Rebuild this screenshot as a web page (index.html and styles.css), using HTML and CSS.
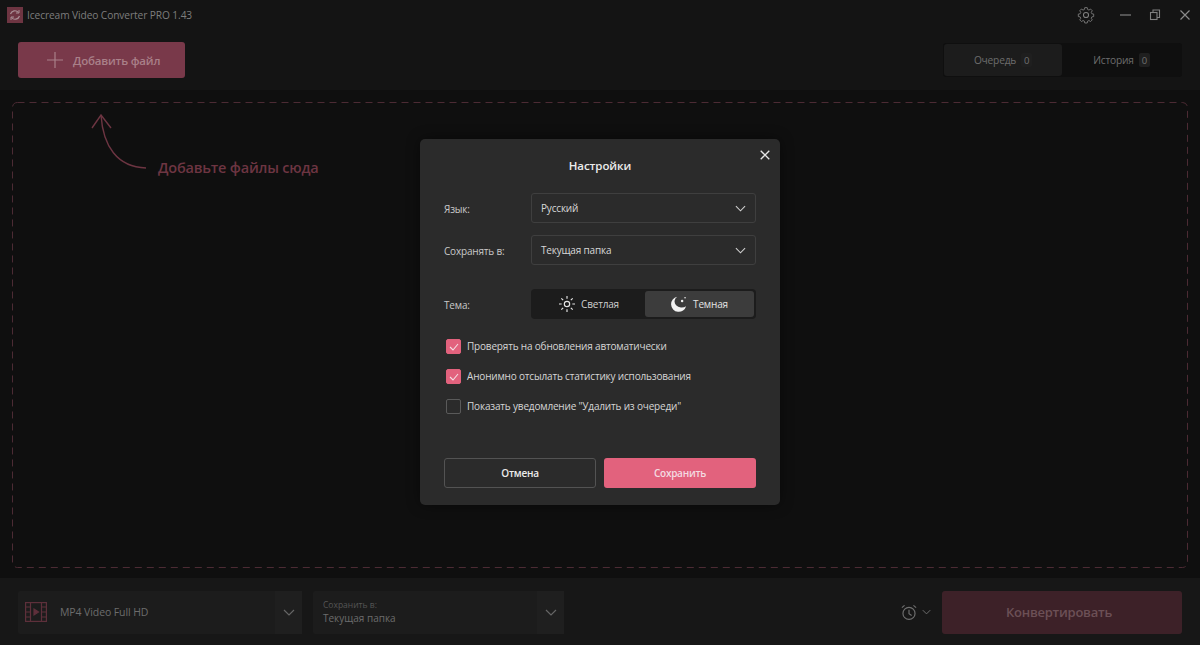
FILE: index.html
```html
<!DOCTYPE html>
<html lang="ru">
<head>
<meta charset="utf-8">
<title>Icecream Video Converter PRO</title>
<link rel="stylesheet" href="styles.css">
</head>
<body>
<div class="app">
  <header class="top">
    <div class="titlebar">
      <div class="brand">
        <svg class="logo" viewBox="0 0 16 16" width="16" height="16"><rect width="16" height="16" fill="#6e3542"/><path d="M3.5 7a4.600 4.600 0 0 1 8-1.500M12.500 9a4.600 4.600 0 0 1-8 1.500" fill="none" stroke="#a98f95" stroke-width="1.200"/><path d="M12 3v3h-3M4 13v-3h3" fill="none" stroke="#a98f95" stroke-width="1"/></svg>
        <span class="apptitle">Icecream Video Converter PRO 1.43</span>
      </div>
      <div class="winctl">
        <svg class="gear" viewBox="0 0 24 24" width="18" height="18" fill="none" stroke="#7f7f7f" stroke-width="1.400"><path d="M10 1.500h4l.6 3 2.200 1 2.600-1.700 2.800 2.800-1.700 2.600 1 2.300 3 .5v4l-3 .6-1 2.200 1.700 2.600-2.800 2.800-2.600-1.700-2.200 1-.6 3h-4l-.6-3-2.200-1-2.600 1.700-2.800-2.800 1.700-2.600-1-2.200-3-.6v-4l3-.5 1-2.300-1.700-2.600 2.800-2.800 2.600 1.700 2.200-1z" transform="translate(12 12) scale(.82) translate(-12 -13.500)" stroke-linejoin="round"/><circle cx="12" cy="12" r="3.400"/></svg>
        <svg class="min" viewBox="0 0 12 12" width="12" height="12"><path d="M0 6h11" stroke="#7f7f7f" stroke-width="1.200"/></svg>
        <svg class="restore" viewBox="0 0 12 12" width="12" height="12" fill="none" stroke="#7f7f7f" stroke-width="1.100"><rect x="1.500" y="3.500" width="6.500" height="7"/><path d="M4 3.500V1h6.500v7.500H8"/></svg>
        <svg class="close" viewBox="0 0 12 12" width="12" height="12"><path d="M1.500 1.500l9 9M10.500 1.500l-9 9" stroke="#8a8a8a" stroke-width="1.200"/></svg>
      </div>
    </div>
    <div class="toolbar">
      <button class="add">
        <svg viewBox="0 0 16 16" width="16" height="16"><path d="M8 0v16M0 8h16" stroke="#a98089" stroke-width="1.200"/></svg>
        <span>Добавить файл</span>
      </button>
      <div class="tabs">
        <div class="tab active"><span>Очередь</span><b class="count">0</b></div>
        <div class="tab"><span>История</span><b class="count">0</b></div>
      </div>
    </div>
  </header>

  <main class="drop">
    <svg class="dash" width="1176" height="466" viewBox="0 0 1176 466"><rect x=".5" y=".5" width="1175" height="465" rx="5" fill="none" stroke="#4c2b34" stroke-dasharray="7 5"/></svg>
    <div class="hint">
      <svg viewBox="0 0 56 60" width="56" height="60" fill="none" stroke="#6d3542" stroke-width="1.400"><path d="M10 1C12 32 26 53 55 54"/><path d="M1 14L10 1l10 13"/></svg>
      <span>Добавьте файлы сюда</span>
    </div>
  </main>

  <footer class="bottom">
    <div class="selectbox format">
      <div class="selmain">
        <svg viewBox="0 0 22 20" width="22" height="20" fill="none" stroke="#5e303b" stroke-width="1.200"><rect x=".6" y=".6" width="20.800" height="18.800"/><path d="M5.500.6v18.800M16.500.6v18.800M.6 5h5M.6 10h5M.6 15h5M16.500 5h5M16.500 10h5M16.500 15h5"/><path d="M9 7l4.500 3L9 13z" fill="#5e303b"/></svg>
        <span>MP4 Video Full HD</span>
      </div>
      <div class="selarrow"><svg class="chev" viewBox="0 0 12 7" width="12" height="7"><path d="M1 1l5 5 5-5" fill="none" stroke="#666" stroke-width="1.200"/></svg></div>
    </div>
    <div class="selectbox saveto">
      <div class="selmain stacked">
        <small>Сохранить в:</small>
        <span>Текущая папка</span>
      </div>
      <div class="selarrow"><svg class="chev" viewBox="0 0 12 7" width="12" height="7"><path d="M1 1l5 5 5-5" fill="none" stroke="#666" stroke-width="1.200"/></svg></div>
    </div>
    <div class="spacer"></div>
    <div class="timer">
      <svg viewBox="0 0 18 18" width="16" height="17" fill="none" stroke="#6f6f6f" stroke-width="1.300"><circle cx="9" cy="10" r="6.800"/><path d="M9 6v4.300l3 2M1 3.500L4 1M17 3.500L14 1"/></svg>
      <svg class="chev" viewBox="0 0 12 7" width="9" height="6"><path d="M1 1l5 5 5-5" fill="none" stroke="#6f6f6f" stroke-width="1.300"/></svg>
    </div>
    <button class="convert">Конвертировать</button>
  </footer>
</div>

<section class="dialog">
  <svg class="dlgclose" viewBox="0 0 10 10" width="10" height="10"><path d="M.7.7l8.600 8.600M9.300.7L.7 9.300" stroke="#e6e6e6" stroke-width="1.300"/></svg>
  <h1>Настройки</h1>
  <div class="row first">
    <label>Язык:</label>
    <div class="field"><span>Русский</span><svg viewBox="0 0 12 7" width="11" height="7"><path d="M1 1l5 5 5-5" fill="none" stroke="#cfcfcf" stroke-width="1.200"/></svg></div>
  </div>
  <div class="row second">
    <label>Сохранять в:</label>
    <div class="field"><span>Текущая папка</span><svg viewBox="0 0 12 7" width="11" height="7"><path d="M1 1l5 5 5-5" fill="none" stroke="#cfcfcf" stroke-width="1.200"/></svg></div>
  </div>
  <div class="row third">
    <label>Тема:</label>
    <div class="theme">
      <div class="opt">
        <svg viewBox="0 0 18 18" width="16" height="16" fill="none" stroke="#e6e6e6" stroke-width="1.300"><circle cx="9" cy="9" r="3"/><path d="M9 0v3M9 15v3M0 9h3M15 9h3M2.600 2.600l2.100 2.100M13.300 13.300l2.100 2.100M2.600 15.400l2.100-2.100M13.300 4.700l2.100-2.100"/></svg>
        <span>Светлая</span>
      </div>
      <div class="opt on">
        <svg viewBox="0 0 18 18" width="16" height="16"><path d="M7 .8A8.600 8.600 0 1 0 17 11.500 7 6 0 0 1 7 .8z" fill="#f2f2f2"/><circle cx="12.500" cy="5.500" r="1.400" fill="#f2f2f2"/><circle cx="15.800" cy="2" r=".9" fill="#f2f2f2"/></svg>
        <span>Темная</span>
      </div>
    </div>
  </div>
  <div class="checks">
    <div class="check"><i class="box on"><svg viewBox="0 0 10 8" width="10" height="8"><path d="M1 4l3 3 5-6" fill="none" stroke="#f5dfe4" stroke-width="1.100"/></svg></i><span>Проверять на обновления автоматически</span></div>
    <div class="check"><i class="box on"><svg viewBox="0 0 10 8" width="10" height="8"><path d="M1 4l3 3 5-6" fill="none" stroke="#f5dfe4" stroke-width="1.100"/></svg></i><span>Анонимно отсылать статистику использования</span></div>
    <div class="check"><i class="box"></i><span>Показать уведомление "Удалить из очереди"</span></div>
  </div>
  <div class="actions">
    <button class="cancel">Отмена</button>
    <button class="save">Сохранить</button>
  </div>
</section>
</body>
</html>
```

FILE: styles.css
```css
* { box-sizing: border-box; }
html, body { margin: 0; height: 100%; }
body { width: 1200px; height: 645px; overflow: hidden; background: #0f0f0f; font-family: "Open Sans", "Noto Sans", sans-serif; position: relative; }
button { font-family: inherit; border: 0; padding: 0; }
svg { display: block; flex: none; }
.app { height: 645px; display: flex; flex-direction: column; }

.top { height: 90px; background: #141414; }
.titlebar { height: 30px; display: flex; justify-content: space-between; align-items: center; padding: 0 0 0 7px; }
.brand { display: flex; align-items: center; gap: 4px; }
.apptitle { font-size: 10.200px; letter-spacing: -.1px; color: #7d7d7d; }
.winctl { display: flex; align-items: center; padding-right: 9px; }
.gear { margin-right: 25px; }
.min { margin-right: 17px; }
.restore { margin-right: 18px; }
.toolbar { height: 60px; display: flex; justify-content: space-between; padding: 12px 18px 0 18px; align-items: flex-start; }
.add { width: 167px; height: 36px; background: #79394a; border-radius: 3px; display: flex; align-items: center; gap: 10px; padding-left: 29px; color: #a98089; font-size: 11.500px; letter-spacing: -.2px; font-weight: 600; }
.tabs { width: 239px; height: 34px; margin-top: 1px; background: #0f0f0f; border-radius: 3px; display: flex; padding: 1px; }
.tab { flex: 1; display: flex; align-items: center; justify-content: center; gap: 5px; font-size: 10.200px; letter-spacing: -.2px; color: #6d6d6d; border-radius: 3px; }
.tab.active { background: #1c1c1c; flex: 0 0 118px; }
.count { font-weight: 400; font-size: 9.500px; width: 11px; height: 14px; background: #1f1f1f; border-radius: 2px; display: flex; align-items: center; justify-content: center; color: #707070; }

.drop { flex: 1; min-height: 0; padding: 12px; background: #0f0f0f; }
.dash { position: absolute; left: 12px; top: 102px; }
.hint { display: flex; align-items: flex-start; margin: 12px 0 0 79px; color: #6d3542; font-size: 14.500px; letter-spacing: -.2px; font-weight: 600; position: relative; }
.hint span { margin: 44px 0 0 11px; }

.bottom { height: 67px; background: #171717; display: flex; align-items: center; padding: 1px 18px 0; }
.selectbox { height: 43px; background: #1c1c1c; display: flex; border-radius: 2px; }
.format { width: 284px; }
.saveto { width: 251px; margin-left: 11px; }
.selmain { flex: 1; display: flex; align-items: center; gap: 13px; padding-left: 7px; font-size: 10.500px; letter-spacing: -.1px; color: #6c6c6c; }
.selmain.stacked { flex-direction: column; align-items: flex-start; gap: 1px; padding-left: 10px; justify-content: center; font-size: 10px; letter-spacing: 0; }
.selmain small { font-size: 8.500px; color: #555; }
.selarrow { width: 27px; background: #1f1f1f; display: flex; align-items: center; justify-content: center; }
.spacer { flex: 1; }
.timer { display: flex; align-items: center; gap: 5px; margin-right: 11px; }
.convert { width: 240px; height: 43px; background: #3d2128; border-radius: 3px; color: #6c5056; font-size: 13px; letter-spacing: -.25px; font-weight: 600; padding-right: 6px; }

.dialog { position: absolute; left: 420px; top: 139px; width: 360px; height: 366px; background: #2b2b2b; border-radius: 5px; box-shadow: 0 0 14px rgba(0,0,0,.45); padding: 0 24px; color: #d6d6d6; font-size: 10px; letter-spacing: -.18px; }
.dlgclose { position: absolute; right: 10px; top: 11px; }
.dialog h1 { margin: 18px 0 0; font-size: 11.500px; letter-spacing: -.1px; line-height: 18px; font-weight: 600; text-align: center; color: #ececec; }
.row { display: flex; align-items: center; }
.row label { width: 87px; padding-top: 2px; color: #c9c9c9; }
.first { margin-top: 18px; }
.second { margin-top: 12px; }
.third { margin-top: 24px; }
.field { width: 225px; height: 30px; border: 1px solid #3f3f3f; border-radius: 3px; display: flex; align-items: center; justify-content: space-between; padding: 0 9px; color: #d8d8d8; }
.theme { width: 225px; height: 30px; background: #1c1c1c; border-radius: 4px; display: flex; padding: 2px; }
.opt { flex: 1; display: flex; align-items: center; justify-content: center; gap: 6px; border-radius: 3px; color: #cfcfcf; }
.opt.on { background: #3c3c3c; flex: 0 0 109px; color: #e4e4e4; }
.checks { margin-top: 20px; display: flex; flex-direction: column; gap: 15px; padding-left: 2px; }
.check { display: flex; align-items: center; gap: 6px; height: 15px; color: #d6d6d6; }
.check span { padding-bottom: 2px; }
.box { width: 15px; height: 15px; border-radius: 2px; border: 1px solid #5a5a5a; display: flex; align-items: center; justify-content: center; }
.box.on { background: #e2627d; border-color: #e2627d; }
.actions { margin-top: 44px; display: flex; justify-content: space-between; }
.actions button { width: 152px; height: 30px; border-radius: 3px; font-size: 10px; letter-spacing: -.25px; font-weight: 600; }
.cancel { background: #2b2b2b; border: 1px solid #535353; color: #ececec; }
.save { background: #e2627d; color: #f4dbe1; }
```
